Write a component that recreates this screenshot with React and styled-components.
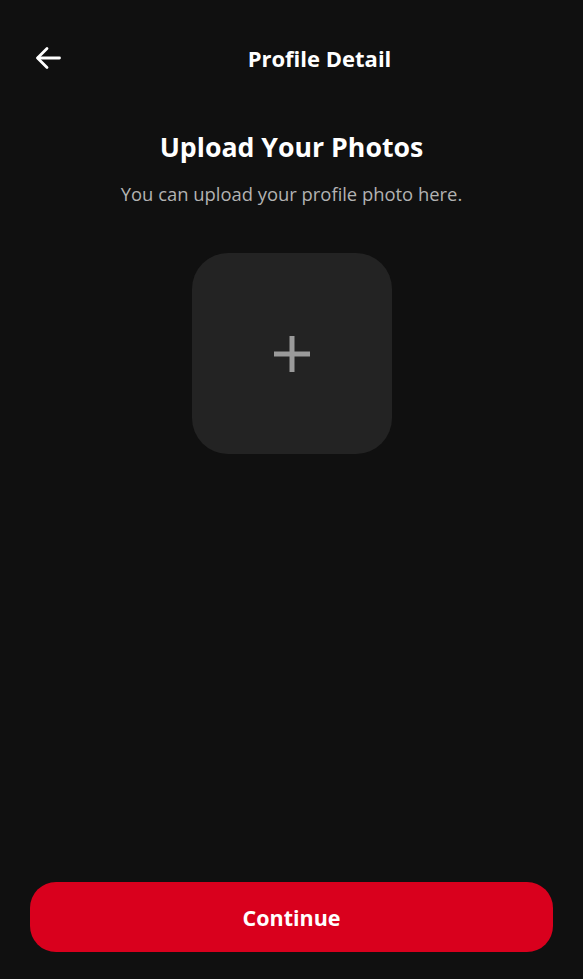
import React from "react";
import styled, { createGlobalStyle } from "styled-components";

const Global = createGlobalStyle`
  html, body { margin: 0; padding: 0; background: #101010; }
  body { font-family: "Open Sans", "Noto Sans", sans-serif; }
  * { box-sizing: border-box; }
`;

const Screen = styled.div`
  min-height: 100vh;
  height: 979px;
  display: flex;
  flex-direction: column;
  background: #101010;
  color: #fff;
  padding: 0 30px 27px;
`;

const Header = styled.header`
  height: 117px;
  display: flex;
  align-items: center;
  padding-bottom: 1px;
`;

const BackButton = styled.button`
  flex: 0 0 56px;
  height: 26px;
  padding: 0 0 0 5px;
  border: 0;
  background: transparent;
  color: #fff;
  display: flex;
  align-items: center;
  justify-content: flex-start;
  cursor: pointer;
`;

const Title = styled.h1`
  flex: 1;
  margin: 0;
  text-align: center;
  font-size: 22px;
  font-weight: 700;
  line-height: 1;
`;

const Heading = styled.h2`
  margin: 12px 0 0;
  text-align: center;
  font-size: 26.7px;
  font-weight: 700;
  line-height: 36px;
`;

const Subtitle = styled.p`
  margin: 16px 0 0;
  text-align: center;
  font-size: 18.4px;
  color: #b3b3b3;
  line-height: 26px;
`;

const UploadBox = styled.button`
  align-self: center;
  margin-top: 46px;
  width: 200px;
  height: 201px;
  border-radius: 36px;
  background: #232323;
  border: 0;
  display: flex;
  align-items: center;
  justify-content: center;
  cursor: pointer;
`;

const ContinueButton = styled.button`
  margin-top: auto;
  height: 70px;
  width: 100%;
  border: 0;
  border-radius: 26px;
  background: #d9001d;
  color: #fff;
  font-family: inherit;
  font-size: 21.5px;
  font-weight: 700;
  cursor: pointer;
`;

export default function App() {
  return (
    <>
      <Global />
      <Screen>
        <Header>
          <BackButton aria-label="Back">
            <svg width="26" height="24" viewBox="0 0 26 24" fill="none" stroke="#fff" strokeWidth="2.8" strokeLinecap="round" strokeLinejoin="round">
              <path d="M24.5 12H3" />
              <path d="M12 2.5L2.5 12L12 21.5" />
            </svg>
          </BackButton>
          <Title>Profile Detail</Title>
        </Header>
        <Heading>Upload Your Photos</Heading>
        <Subtitle>You can upload your profile photo here.</Subtitle>
        <UploadBox aria-label="Add photo">
          <svg width="36" height="36" viewBox="0 0 36 36">
            <rect x="15.5" y="0" width="5" height="36" fill="#9a9a9a" />
            <rect x="0" y="15.5" width="36" height="5" fill="#9a9a9a" />
          </svg>
        </UploadBox>
        <ContinueButton>Continue</ContinueButton>
      </Screen>
    </>
  );
}
